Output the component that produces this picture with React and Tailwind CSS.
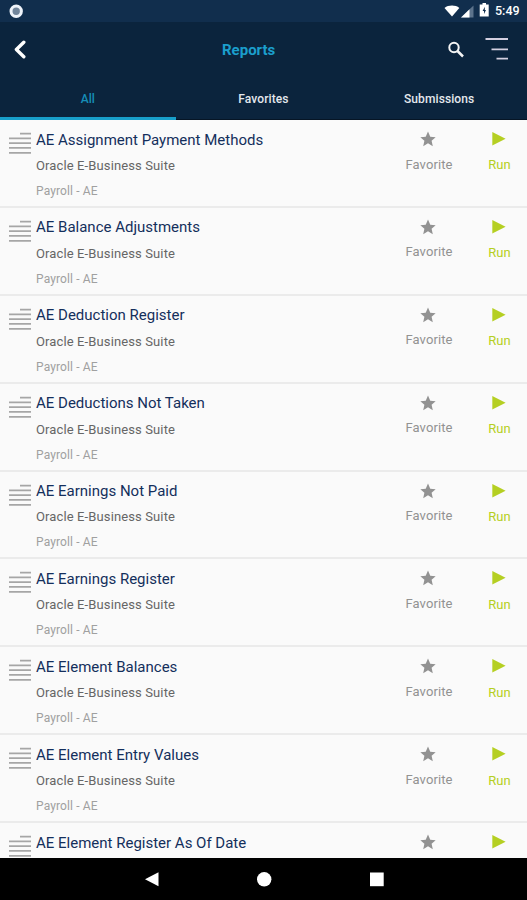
const reports = [
    'AE Assignment Payment Methods',
    'AE Balance Adjustments',
    'AE Deduction Register',
    'AE Deductions Not Taken',
    'AE Earnings Not Paid',
    'AE Earnings Register',
    'AE Element Balances',
    'AE Element Entry Values',
    'AE Element Register As Of Date'
];

const tabs = ['All', 'Favorites', 'Submissions'];

function StatusBar() {
    return (
        <div className="flex h-[22px] shrink-0 items-center bg-[#112e4d] pl-[9px] pr-[6px]">
            <svg width="15" height="15" viewBox="0 0 15 15">
                <circle cx="7.2" cy="7.3" r="5.2" fill="#71859b" stroke="#eef3fa" strokeWidth="3" />
            </svg>
            <div className="ml-auto flex items-center">
                <svg width="49" height="18" viewBox="0 0 49 18">
                    <path d="M0.5 6C4.5 2.8 11.5 2.8 15.3 6L8 14.5Z" fill="#fff" />
                    <path d="M29.5 3.5V15.5H17Z" fill="#5c738c" />
                    <path d="M25.5 7.3V15.5H17Z" fill="#fff" />
                    <path d="M38.5 1H42V2.5H44.7V14.5H35.7V2.5H38.5Z" fill="#fff" />
                    <path d="M40.8 4.8L38.6 9H40V12L42 8H40.8Z" fill="#112e4d" />
                </svg>
                <span className="ml-[2px] w-[26px] whitespace-nowrap text-[12.5px] font-medium leading-none text-white">5:49</span>
            </div>
        </div>
    );
}

function AppBar() {
    return (
        <div className="grid h-[55px] shrink-0 grid-cols-[209px_auto_1fr] items-center pl-[13px] pr-[19px]">
            <svg width="14" height="20" viewBox="0 0 14 20">
                <path d="M10.8 2.3L3.4 9.5L10.8 16.7" fill="none" stroke="#fff" strokeWidth="3.4" strokeLinecap="round" strokeLinejoin="round" />
            </svg>
            <h1 className="text-[15px] font-bold leading-5 text-[#1b9fcd]">Reports</h1>
            <div className="flex items-center justify-end gap-[19px]">
                <svg width="18" height="18" viewBox="0 0 18 18" fill="none" stroke="#f5f5f5">
                    <circle cx="7" cy="6.5" r="4.7" strokeWidth="2" />
                    <path d="M10.5 10L16 15.5" strokeWidth="2.5" />
                </svg>
                <svg width="24" height="24" viewBox="0 0 24 24" stroke="#d3cfe0" strokeWidth="1.8">
                    <path d="M1.5 1H24M7.5 11.4H24M12.5 20.6H24" />
                </svg>
            </div>
        </div>
    );
}

function Tabs() {
    return (
        <div className="grid h-[43px] shrink-0 grid-cols-3 border-b border-[#061525]">
            {tabs.map((tab, i) => (
                <button
                    key={tab}
                    className={`-mb-px border-b-3 pt-[4px] text-[12px] font-medium tracking-[0.1px] ${i === 0 ? 'border-[#189fca] text-[#168eb8]' : 'border-transparent text-[#e4e8ed]'}`}
                >
                    {tab}
                </button>
            ))}
        </div>
    );
}

function ReportRow({ name, clipped }) {
    return (
        <li className="flex h-[87.875px] shrink-0 items-start border-b-2 border-[#ebebeb] pl-[9px]">
            <svg className="mt-[12px] shrink-0" width="22" height="22" viewBox="0 0 22 22" stroke="#a6a6a6" strokeWidth="1.7">
                <path d="M11 1.7H22M0 6.4H22M0 11.1H22M0 15.9H22M0 20.8H22" />
            </svg>
            <div className="ml-[5px] flex-1 whitespace-nowrap pt-[9.6px]">
                <p className="text-[15px] leading-5 text-[#142f5c]">{name}</p>
                {!clipped && (
                    <>
                        <p className="mt-[6.4px] text-[13px] leading-5 tracking-[0.12px] text-[#666]">Oracle E-Business Suite</p>
                        <p className="mt-[5px] text-[12px] leading-5 tracking-[0.12px] text-[#a0a0a0]">Payroll - AE</p>
                    </>
                )}
            </div>
            <button className="flex w-[58px] flex-col items-center pt-[11px] text-[13px] leading-5 text-[#929292]">
                <svg width="16" height="16" viewBox="0 0 24 24" fill="#929292">
                    <path d="M12 0.8L15.4 8.5L23.5 9.3L17.4 14.7L19.2 22.8L12 18.5L4.8 22.8L6.6 14.7L0.5 9.3L8.6 8.5Z" />
                </svg>
                {!clipped && <span className="mt-[7.6px] pl-[2px] tracking-[0.1px]">Favorite</span>}
            </button>
            <button className="ml-[13px] mr-[-1px] flex w-[58px] flex-col items-center pt-[12px] text-[13px] leading-5 text-[#b5cf22]">
                <svg width="14" height="14" viewBox="0 0 14 14" fill="#b5cf22">
                    <path d="M0.3 0L13.6 6.7L0.3 13.4Z" />
                </svg>
                {!clipped && <span className="mt-[9.4px] pl-px">Run</span>}
            </button>
        </li>
    );
}

function NavBar() {
    return (
        <div className="flex h-[42px] shrink-0 items-center justify-center bg-black">
            <svg width="240" height="16" viewBox="0 0 240 16" fill="#fff">
                <path d="M14.5 1.2V15.2L1 8.2Z" />
                <circle cx="120.2" cy="8.3" r="7.2" />
                <rect x="226" y="1.5" width="13.7" height="13.7" />
            </svg>
        </div>
    );
}

export default function App() {
    return (
        <div className="flex h-[900px] w-[527px] flex-col overflow-hidden bg-[#fafafa] font-[Roboto,sans-serif]">
            <StatusBar />
            <header className="flex shrink-0 flex-col bg-[#0b243d]">
                <AppBar />
                <Tabs />
            </header>
            <ul className="min-h-0 flex-1 overflow-hidden">
                {reports.map((name, i) => (
                    <ReportRow key={name} name={name} clipped={i === reports.length - 1} />
                ))}
            </ul>
            <NavBar />
        </div>
    );
}
